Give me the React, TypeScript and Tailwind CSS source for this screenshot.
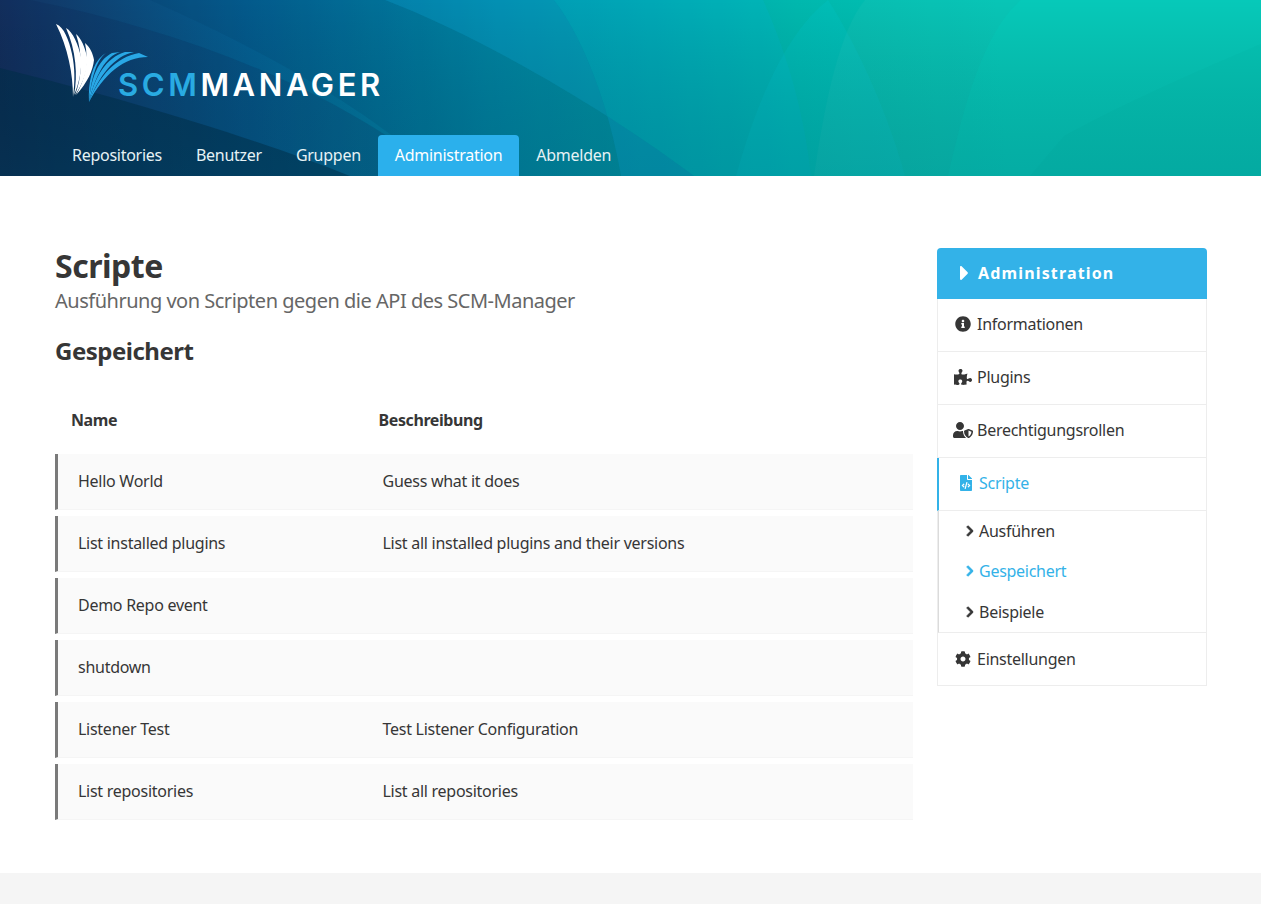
import { FaCaretRight, FaChevronRight, FaCog, FaFileCode, FaInfoCircle, FaPuzzlePiece, FaUserShield } from "react-icons/fa";

const scripts = [
  { name: "Hello World", description: "Guess what it does" },
  { name: "List installed plugins", description: "List all installed plugins and their versions" },
  { name: "Demo Repo event", description: "" },
  { name: "shutdown", description: "" },
  { name: "Listener Test", description: "Test Listener Configuration" },
  { name: "List repositories", description: "List all repositories" },
];

const navItems = ["Repositories", "Benutzer", "Gruppen", "Administration", "Abmelden"];

function HeaderArt() {
  return (
    <svg className="absolute inset-0 h-full w-full" viewBox="0 0 1261 176" preserveAspectRatio="none">
      <defs>
        <linearGradient id="base" gradientUnits="userSpaceOnUse" x1="0" y1="110" x2="1000" y2="50">
          <stop offset="0" stopColor="#14305f" />
          <stop offset="0.25" stopColor="#045f92" />
          <stop offset="0.5" stopColor="#0090ac" />
          <stop offset="0.8" stopColor="#00b8ae" />
          <stop offset="1" stopColor="#00c4b4" />
        </linearGradient>
        <linearGradient id="fade" x1="0" y1="0" x2="0" y2="1">
          <stop offset="0" stopColor="#000" stopOpacity="0" />
          <stop offset="1" stopColor="#003a50" stopOpacity="0.2" />
        </linearGradient>
      </defs>
      <rect width="1261" height="176" fill="url(#base)" />
      <path d="M30 0 C180 30 340 90 440 176 L0 176 L0 0Z" fill="#0a1f50" fillOpacity="0.18" />
      <path d="M0 68 C130 100 260 140 350 176 L0 176Z" fill="#00304a" fillOpacity="0.55" />
      <path d="M385 0 C490 40 620 120 694 176 L440 176 C360 100 240 40 150 0Z" fill="#003a60" fillOpacity="0.14" />
      <path d="M385 0 C490 40 620 120 694 176 L621 176 C610 110 585 40 554 0Z" fill="#0a90c8" fillOpacity="0.25" />
      <path d="M554 0 L763 0 C790 60 805 120 811 176 L621 176 C610 110 585 40 554 0Z" fill="#00b8d8" fillOpacity="0.22" />
      <path d="M736 176 C760 90 790 30 828 0 C860 50 890 120 905 176Z" fill="#00c8d0" fillOpacity="0.22" />
      <path d="M814 176 C825 100 840 30 865 0 L1261 0 L1261 176Z" fill="#ffffff" fillOpacity="0.03" />
      <path d="M948 176 C965 100 985 30 1021 0 L1261 0 L1261 176Z" fill="#00e0c8" fillOpacity="0.18" />
      <path d="M1064 136 C1130 100 1200 70 1261 44 L1261 176 L1030 176Z" fill="#00a090" fillOpacity="0.06" />
      <rect width="1261" height="176" fill="url(#fade)" />
    </svg>
  );
}

function LogoWing() {
  return (
    <svg className="h-[82px] w-[95px] shrink-0" viewBox="55 22 95 82">
      <g fill="#ffffff">
        <path d="M56 24 C64 27 69 40 72 54 C75 68 75 82 73 97 C73 74 68 48 56 24Z" />
        <path d="M66 28 C73 32 78 44 81 57 C82 70 79 84 74 95 C78 76 76 50 66 28Z" />
        <path d="M76 34 C81 38 85 47 87 57 C88 70 83 84 75 95 C82 78 83 55 76 34Z" />
        <path d="M85 43 C90 47 93 54 94 60 C93 70 88 82 76 95 C85 80 89 62 85 43Z" />
      </g>
      <g fill="#29a8e6">
        <path d="M106 53 C96 60 91 80 89 102 C88 82 92 64 103 55Z" />
        <path d="M120 52 C106 56 95 76 89 102 C91 78 98 60 112 53Z" />
        <path d="M134 52 C114 56 99 76 89 102 C95 76 106 58 125 52Z" />
        <path d="M148 57 C124 57 104 74 89 102 C99 76 116 57 139 53Z" />
      </g>
    </svg>
  );
}

function SideItem({
  icon,
  label,
  active,
  last,
}: {
  icon: React.ReactNode;
  label: string;
  active?: boolean;
  last?: boolean;
}) {
  return (
    <div
      className={`flex h-[53px] items-center border-b border-[#ededed] ${last ? "" : "pb-[2px]"} ${
        active ? "-ml-px border-l-2 border-l-[#33b2e8] pl-[17px] text-[#33b2e8]" : "pl-[15px]"
      }`}
    >
      <span className={`flex w-[20px] justify-center text-[16px] ${active ? "mr-[3px]" : "mr-[4px]"}`}>{icon}</span>
      {label}
    </div>
  );
}

function SubItem({ label, active }: { label: string; active?: boolean }) {
  return (
    <div className={`flex flex-1 items-center pl-[25px] ${active ? "text-[#33b2e8]" : ""}`}>
      <FaChevronRight className="mr-[3px] text-[12px]" stroke="currentColor" strokeWidth={40} />
      {label}
    </div>
  );
}

export default function App() {
  return (
    <div className="min-h-[904px] bg-white font-['Noto_Sans',sans-serif] text-[16px] tracking-[-0.27px] text-[#363636]">
      <header className="relative flex h-[176px] flex-col overflow-hidden px-[55px]">
        <HeaderArt />
        <div className="relative mt-[22px] flex h-[82px] items-end">
          <LogoWing />
          <div className="mb-[1px] ml-[-32px] whitespace-nowrap font-['Inter',sans-serif] text-[31px] leading-[36px] font-semibold tracking-[3.6px] text-white">
            <span className="text-[#29abe2]">SCM</span>MANAGER
          </div>
        </div>
        <nav className="relative mt-auto flex">
          {navItems.map((item) => (
            <a
              key={item}
              className={`flex h-[41px] items-center rounded-t-[4px] px-[17px] pb-[2px] ${
                item === "Administration" ? "bg-[#2bb0ec] text-white" : "text-[#e6f2f5]"
              }`}
            >
              {item}
            </a>
          ))}
        </nav>
      </header>

      <div className="flex gap-[24px] pt-[72px] pr-[54px] pb-[53px] pl-[55px]">
        <main className="w-[858px] shrink-0">
          <h1 className="mt-[-2px] text-[32px] leading-[40px] font-bold tracking-[-0.5px]">Scripte</h1>
          <p className="text-[20px] leading-[30px] tracking-[-0.49px] text-[#666666]">
            Ausführung von Scripten gegen die API des SCM-Manager
          </p>
          <h2 className="mt-[17px] text-[24px] leading-[36px] font-bold tracking-[-0.5px]">Gespeichert</h2>

          <div className="mt-[34px] grid h-[34px] grid-cols-[307.5px_1fr] items-center pl-[16px] font-bold tracking-[-0.4px]">
            <div>Name</div>
            <div>Beschreibung</div>
          </div>
          <div className="mt-[17px] flex flex-col gap-[6px]">
            {scripts.map((s) => (
              <div
                key={s.name}
                className="grid h-[56px] grid-cols-[304.5px_1fr] items-center border-b border-l-[3px] border-b-[#f5f5f5] border-l-[#7a7a7a] bg-[#fafafa] pb-[1px] pl-[20px]"
              >
                <div>{s.name}</div>
                <div>{s.description}</div>
              </div>
            ))}
          </div>
        </main>

        <aside className="w-[270px] shrink-0">
          <div className="flex h-[51px] items-center rounded-t-[4px] bg-[#33b2e8] pb-[2px] pl-[23px] font-bold tracking-[1.15px] text-white">
            <FaCaretRight className="mr-[9px] h-[24px] w-[9px]" />
            Administration
          </div>
          <div className="border-x border-[#ededed]">
            <SideItem icon={<FaInfoCircle />} label="Informationen" />
            <SideItem icon={<FaPuzzlePiece className="h-[16px] w-[18px] shrink-0" />} label="Plugins" />
            <SideItem icon={<FaUserShield className="h-[16px] w-[20px] shrink-0" />} label="Berechtigungsrollen" />
            <SideItem icon={<FaFileCode />} label="Scripte" active />
            <div className="flex h-[122px] flex-col border-b border-l-[1px] border-b-[#ededed] border-l-[#dbdbdb]">
              <SubItem label="Ausführen" />
              <SubItem label="Gespeichert" active />
              <SubItem label="Beispiele" />
            </div>
            <SideItem icon={<FaCog />} label="Einstellungen" last />
          </div>
        </aside>
      </div>

      <footer className="h-[31px] bg-[#f5f5f5]" />
    </div>
  );
}
